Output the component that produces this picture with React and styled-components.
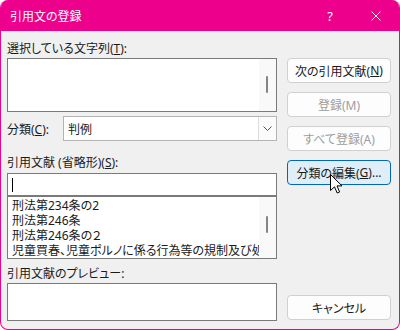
import React from 'react'
import styled, { createGlobalStyle } from 'styled-components'

const GlobalStyle = createGlobalStyle`
html, body {
    margin: 0;
    padding: 0;
    background: #ffffff;
}
body {
    font-family: "Noto Sans", "Noto Sans CJK JP", sans-serif;
    font-size: 12px;
    color: #1a1a1a;
    font-feature-settings: "palt";
}
`

const Janela = styled.div`
position: relative;
width: 400px;
height: 330px;
box-sizing: border-box;
display: flex;
flex-direction: column;
border: 1px solid #ec008c;
border-top: none;
border-radius: 8px;
overflow: hidden;
background: #f0f0f0;
`

const BarraTitulo = styled.div`
height: 31px;
flex-shrink: 0;
display: flex;
align-items: center;
background: #ec008c;
color: #ffffff;
padding-left: 9px;
`

const Titulo = styled.div`
flex: 1;
font-size: 12px;
`

const BotaoLegenda = styled.div`
width: 46px;
height: 31px;
display: flex;
align-items: center;
justify-content: center;
font-size: 13px;
`

const Corpo = styled.div`
flex: 1;
display: flex;
gap: 10px;
padding: 8px 8px 8px 6px;
`

const ColunaEsquerda = styled.div`
width: 270px;
display: flex;
flex-direction: column;
`

const ColunaDireita = styled.div`
width: 104px;
display: flex;
flex-direction: column;
gap: 9px;
padding: 19px 0 1px;
`

const Rotulo = styled.div`
height: ${p => p.$altura || 19}px;
line-height: ${p => p.$altura || 19}px;
margin-top: ${p => p.$topo || 0}px;
white-space: nowrap;
`

const Caixa = styled.div`
height: ${p => p.$altura}px;
box-sizing: border-box;
border: 1px solid #7a7a7a;
background: #ffffff;
display: flex;
`

const Conteudo = styled.div`
flex: 1;
min-width: 0;
overflow: hidden;
padding: 1px 0 0 4px;
`

const Item = styled.div`
height: 15px;
line-height: 15px;
white-space: nowrap;
`

const Rolagem = styled.div`
width: 17px;
background: #f9f9f9;
`

const Polegar = styled.div`
width: 2px;
height: 17px;
margin: ${p => p.$topo}px 0 0 7px;
background: #858585;
border-radius: 1px;
`

const LinhaCombo = styled.div`
margin-top: 4px;
height: 25px;
display: flex;
align-items: center;
`

const RotuloCombo = styled.div`
width: 56px;
`

const Combo = styled.div`
flex: 1;
height: 25px;
box-sizing: border-box;
border: 1px solid #b4b4b4;
background: #ffffff;
display: flex;
align-items: center;
padding-left: 4px;
`

const SetaCombo = styled.div`
margin-left: auto;
width: 17px;
height: 23px;
border-left: 1px solid #dcdcdc;
background: #fbfbfb;
display: flex;
align-items: center;
justify-content: center;
`

const Entrada = styled.div`
height: 23px;
box-sizing: border-box;
border: 1px solid #7a7a7a;
background: #ffffff;
display: flex;
align-items: center;
padding-left: 4px;
`

const Cursor = styled.div`
width: 1px;
height: 14px;
background: #000000;
`

const Botao = styled.div`
height: 25px;
box-sizing: border-box;
border: 1px solid ${p => (p.$foco ? '#0067c0' : '#d0d0d0')};
border-radius: 4px;
background: ${p => (p.$foco ? '#e0eef9' : '#fdfdfd')};
color: ${p => (p.$desativado ? '#9d9d9d' : '#1a1a1a')};
display: flex;
align-items: center;
justify-content: center;
white-space: nowrap;
`

const BotaoCancelar = styled(Botao)`
margin-top: auto;
`

const Ponteiro = styled.svg`
position: absolute;
left: 329px;
top: 174px;
`

export default function App() {
    const lista = [
        '刑法第234条の2',
        '刑法第246条',
        '刑法第246条の２',
        '児童買春、児童ポルノに係る行為等の規制及び処罰並びに児童の保護等に関する法律',
    ]

    return (
        <>
            <GlobalStyle />
            <Janela>
                <BarraTitulo>
                    <Titulo>引用文の登録</Titulo>
                    <BotaoLegenda>?</BotaoLegenda>
                    <BotaoLegenda>
                        <svg width="10" height="10" viewBox="0 0 10 10">
                            <path d="M0.5 0.5 L9.5 9.5 M9.5 0.5 L0.5 9.5" stroke="#ffffff" strokeWidth="1" />
                        </svg>
                    </BotaoLegenda>
                </BarraTitulo>
                <Corpo>
                    <ColunaEsquerda>
                        <Rotulo>選択している文字列(<u>T</u>):</Rotulo>
                        <Caixa $altura={54}>
                            <Conteudo />
                            <Rolagem><Polegar $topo={17} /></Rolagem>
                        </Caixa>
                        <LinhaCombo>
                            <RotuloCombo>分類(<u>C</u>):</RotuloCombo>
                            <Combo>
                                判例
                                <SetaCombo>
                                    <svg width="9" height="5" viewBox="0 0 9 5">
                                        <path d="M0.5 0.5 L4.5 4.5 L8.5 0.5" fill="none" stroke="#555555" strokeWidth="1" />
                                    </svg>
                                </SetaCombo>
                            </Combo>
                        </LinhaCombo>
                        <Rotulo $topo={12} $altura={20}>引用文献 (省略形)(<u>S</u>):</Rotulo>
                        <Entrada><Cursor /></Entrada>
                        <Caixa $altura={63}>
                            <Conteudo>
                                {lista.map((texto) => (
                                    <Item key={texto}>{texto}</Item>
                                ))}
                            </Conteudo>
                            <Rolagem><Polegar $topo={19} /></Rolagem>
                        </Caixa>
                        <Rotulo $topo={5}>引用文献のプレビュー:</Rotulo>
                        <Caixa $altura={38} />
                    </ColunaEsquerda>
                    <ColunaDireita>
                        <Botao>次の引用文献(<u>N</u>)</Botao>
                        <Botao $desativado>登録(M)</Botao>
                        <Botao $desativado>すべて登録(A)</Botao>
                        <Botao $foco>分類の編集(<u>G</u>)...</Botao>
                        <BotaoCancelar>キャンセル</BotaoCancelar>
                    </ColunaDireita>
                </Corpo>
                <Ponteiro width="13" height="21" viewBox="0 0 13 21">
                    <path
                        d="M0.5 0.5 L0.5 16.5 L4.5 12.8 L7.2 19 L9.6 18 L7 11.9 L12 11.9 Z"
                        fill="#ffffff"
                        stroke="#000000"
                        strokeWidth="1"
                        strokeLinejoin="round"
                    />
                </Ponteiro>
            </Janela>
        </>
    )
}
